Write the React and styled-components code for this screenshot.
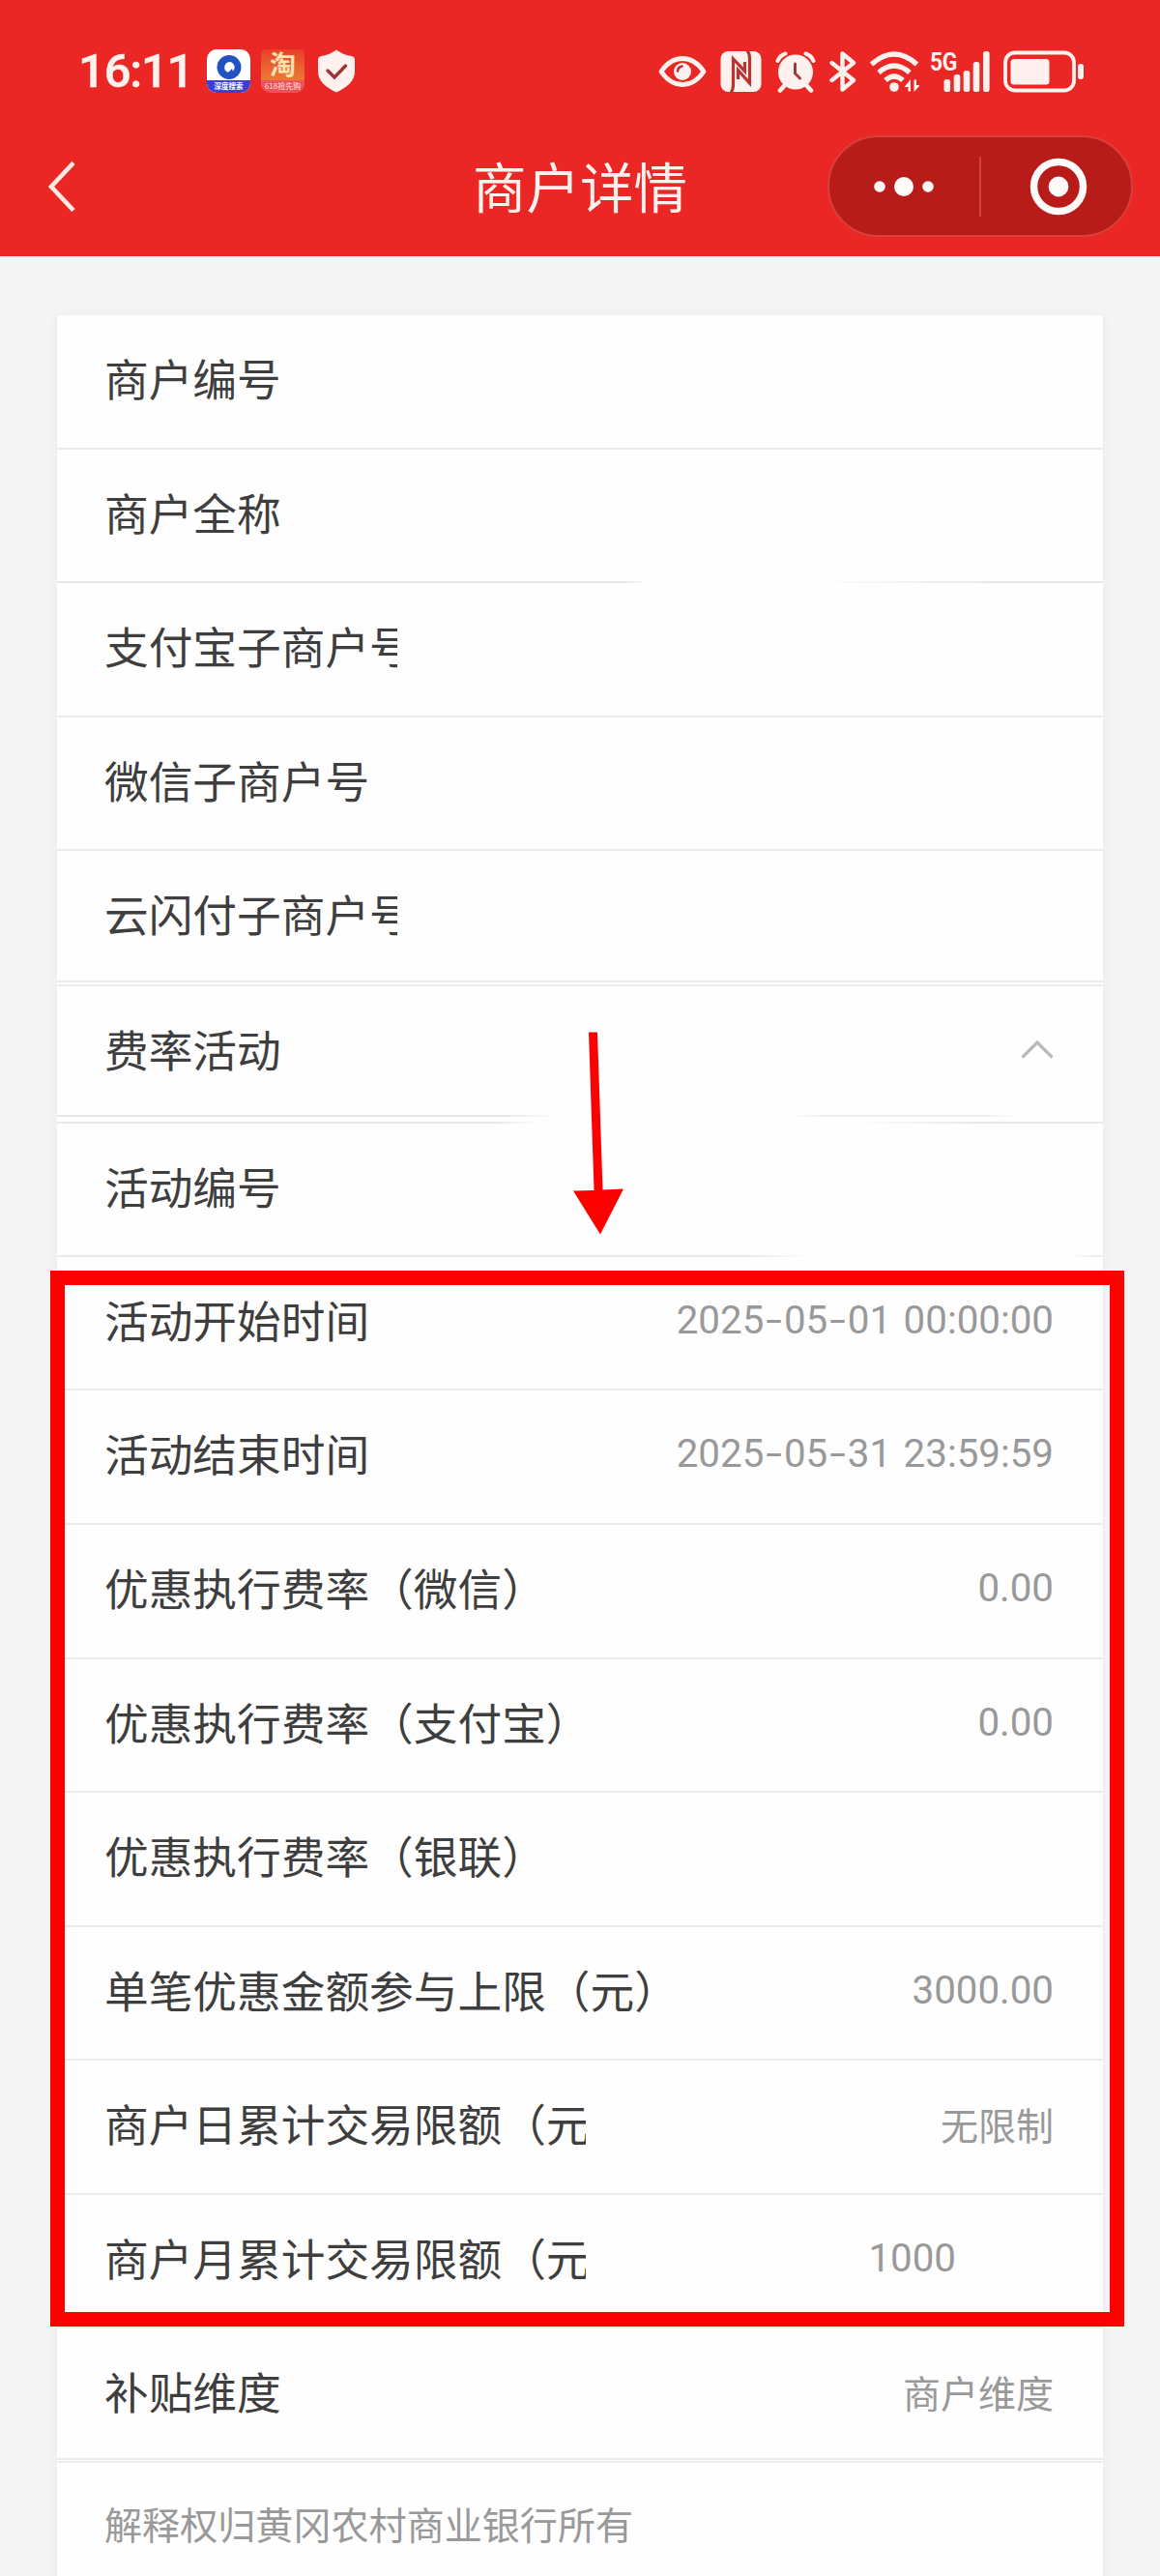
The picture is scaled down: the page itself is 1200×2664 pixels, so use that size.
import React from 'react'
import styled, { createGlobalStyle, ThemeProvider } from 'styled-components'

const theme = {
    colors: {
        primary: '#ea2724',
        mark: '#fb0200',
        ink: '#fff1ee',
        label: '#3e3e3e',
        value: '#999999',
        line: '#ebebeb',
        page: '#f4f4f4',
        card: '#fefefe',
    },
    cjk: '"Noto Sans CJK SC", sans-serif',
    digits: 'Roboto, "Noto Sans CJK SC", sans-serif',
}

// dividers that fade away in the middle of the card
const fades = {
    name: 'linear-gradient(90deg, #e8e8e8 54.5%, #fefefe 56.5%, #fefefe 72%, #e8e8e8 90%)',
    rateEnd: 'linear-gradient(90deg, #e8e8e8 43%, #fefefe 48%, #fefefe 70%, #ebebeb 74%, #ebebeb 88%, #fefefe 92%)',
    rateStart: 'linear-gradient(90deg, #e8e8e8 42%, #fefefe 46%, #fefefe 76%, #e8e8e8 88%)',
    number: 'linear-gradient(90deg, #e8e8e8 66%, #fefefe 72%, #fefefe 97%, #eeeeee 99%)',
}

const basicRows = [
    { label: '商户编号' },
    { label: '商户全称', fade: fades.name },
    { label: '支付宝子商户号', clip: 302 },
    { label: '微信子商户号' },
    { label: '云闪付子商户号', clip: 302, height: 134 },
]

const activityRows = [
    { label: '活动编号', height: 136, fade: fades.number },
    { label: '活动开始时间', value: '2025-05-01 00:00:00' },
    { label: '活动结束时间', value: '2025-05-31 23:59:59' },
    { label: '优惠执行费率（微信）', value: '0.00' },
    { label: '优惠执行费率（支付宝）', value: '0.00' },
    { label: '优惠执行费率（银联）' },
    { label: '单笔优惠金额参与上限（元）', value: '3000.00' },
    { label: '商户日累计交易限额（元）', clip: 497, text: '无限制' },
    { label: '商户月累计交易限额（元）', clip: 497, value: '1000', indent: 101 },
    { label: '补贴维度', text: '商户维度', height: 133.2 },
]

const Digits = ({ children }) => (
    <>
        {children.split(/(-)/).map((part, i) =>
            part === '-' ? <Dash key={i}><i>-</i></Dash> : part
        )}
    </>
)

const Item = ({ label, value, text, clip, height, fade, indent }) => (
    <>
        <Row $height={height}>
            <Label $clip={clip}>{label}</Label>
            {value && <Amount $indent={indent}><Digits>{value}</Digits></Amount>}
            {text && <Value>{text}</Value>}
        </Row>
        <Line $fade={fade} />
    </>
)

const StatusIcons = () => (
    <Tray>
        <svg width="50" height="44" viewBox="0 0 50 44" fill="none">
            <path d="M3 22C9 13 16 8.500 25 8.500S41 13 47 22C41 31 34 35.500 25 35.500S9 31 3 22Z" stroke="#fff1ee" strokeWidth="4.800" strokeLinejoin="round" />
            <circle cx="25" cy="22" r="9" fill="#fff1ee" />
            <path d="M20 21.500c.3-2.500 2-4.500 4.500-5" stroke="#c0302c" strokeWidth="2.600" strokeLinecap="round" />
        </svg>
        <svg width="43" height="44" viewBox="0 0 43 44">
            <rect x=".5" y="1" width="42" height="42" rx="8" fill="#fff1ee" />
            <g fill="none" stroke="#b83430" strokeWidth="3.200">
                <path d="M11 43.500Q13.500 41 13.500 35V9L25.500 21.500V12" />
                <path d="M28 .5Q30.500 3 30.500 9V34L18.500 20.500V30" />
            </g>
        </svg>
        <svg width="42" height="44" viewBox="0 0 42 44" fill="none" stroke="#fff1ee">
            <path d="M2.500 11Q4.500 5.500 10.500 3.500M39.500 11Q37.500 5.500 31.500 3.500" strokeWidth="4" strokeLinecap="round" />
            <path d="M10 36L5 41.500M32 36L37 41.500" strokeWidth="4.600" strokeLinecap="round" />
            <circle cx="21" cy="22.500" r="18" fill="#fff1ee" stroke="none" />
            <path d="M20.500 14V24L25.500 29" stroke="#a63a38" strokeWidth="3" strokeLinecap="round" />
        </svg>
        <svg width="28" height="44" viewBox="0 0 28 44" fill="none" stroke="#fff1ee" strokeWidth="4.400" strokeLinejoin="round" strokeLinecap="round">
            <path d="M2.500 13L25 31L13.500 40.500V3.500L25 13L2.500 31" />
        </svg>
        <svg width="51" height="44" viewBox="0 0 51 44" fill="none" stroke="#fff1ee" strokeWidth="5.200">
            <path d="M1.500 14.500Q25 -6.500 48.500 14.500" />
            <path d="M9 23Q25 9 41 23" />
            <path d="M16 31Q25 23 34 31" />
            <circle cx="25" cy="38" r="4.800" fill="#fff1ee" stroke="none" />
            <path d="M35.500 38L42 30V42.500H39.500V38ZM52 36L45.500 43V30.500H48V36Z" fill="#fff1ee" stroke="none" />
        </svg>
        <Signal>
            <Network>5G</Network>
            <svg width="62" height="44" viewBox="0 0 62 44" fill="#fff1ee">
                <rect x="14.500" y="30" width="6.600" height="13" rx="2.500" />
                <rect x="24.700" y="25" width="6.600" height="18" rx="2.500" />
                <rect x="34.700" y="21" width="6.600" height="22" rx="2.500" />
                <rect x="44.700" y="12" width="6.600" height="31" rx="2.500" />
                <rect x="55" y="1" width="6.600" height="42" rx="2.500" />
            </svg>
        </Signal>
        <svg width="84" height="44" viewBox="0 0 84 44">
            <rect x="2" y="2.500" width="71" height="39" rx="10" fill="none" stroke="#fff1ee" strokeWidth="3.800" />
            <rect x="7.500" y="9" width="40" height="26.500" rx="3.500" fill="#fff1ee" />
            <rect x="77" y="14" width="6" height="16" rx="3" fill="#fff1ee" />
        </svg>
    </Tray>
)

export default function App() {
    return (
        <ThemeProvider theme={theme}>
            <Reset />
            <Page>
                <Header>
                    <StatusBar>
                        <Clock>16:11</Clock>
                        <SearchApp>
                            <svg width="26" height="27" viewBox="0 0 26 27">
                                <circle cx="13" cy="13.500" r="12.500" fill="#2152c4" />
                                <path d="M13 8a5.500 5.500 0 1 1-3.500 9.600A6 6 0 0 1 13 8z" fill="#fff" />
                                <path d="M11 20l5 -5l2 6z" fill="#2152c4" />
                            </svg>
                            <AppTag>深度搜索</AppTag>
                        </SearchApp>
                        <ShopApp>
                            <ShopGlyph>淘</ShopGlyph>
                            <ShopTag>618抢先购</ShopTag>
                        </ShopApp>
                        <svg width="40" height="45" viewBox="0 0 40 45">
                            <path d="M20 0.500C26 5 32 6.500 36 7Q39 8 39 11V23C39 33 31 39 20 44.500C9 39 1 33 1 23V11Q1 8 4 7C8 6.500 14 5 20 .5Z" fill="#fff1ee" />
                            <path d="M11 22L18 29L29.500 17" fill="none" stroke="#9c3438" strokeWidth="3.400" strokeLinecap="round" />
                        </svg>
                        <StatusIcons />
                    </StatusBar>
                    <NavBar>
                        <Back>
                            <svg width="28" height="52" viewBox="0 0 28 52" fill="none" stroke="#ffe9e4" strokeWidth="4.600">
                                <path d="M26 1.500L3 26L26 50.500" />
                            </svg>
                        </Back>
                        <Title>商户详情</Title>
                        <Capsule>
                            <svg width="62" height="22" viewBox="0 0 62 22" fill="#fffafa">
                                <circle cx="6" cy="11" r="5.800" />
                                <circle cx="31" cy="11" r="10" />
                                <circle cx="56" cy="11" r="5.800" />
                            </svg>
                            <Split />
                            <svg width="60" height="60" viewBox="0 0 60 60">
                                <circle cx="30" cy="30" r="25.500" fill="none" stroke="#fffafa" strokeWidth="7.500" />
                                <circle cx="30" cy="30" r="10.400" fill="#fffafa" />
                            </svg>
                        </Capsule>
                    </NavBar>
                </Header>

                <Card>
                    {basicRows.map((row) => <Item key={row.label} {...row} />)}
                    <Gap $size={1.6} />
                    <Line />
                    <Row $height={133}>
                        <Label>费率活动</Label>
                        <svg width="34" height="132" viewBox="0 0 34 132" fill="none" stroke="#b9b9b9" strokeWidth="3.200">
                            <path d="M1.500 73.500L17 58L32.500 73.500" />
                        </svg>
                    </Row>
                    <Line $fade={fades.rateEnd} />
                    <Gap $size={5} />
                    <Line $fade={fades.rateStart} />
                    {activityRows.map((row) => <Item key={row.label} {...row} />)}
                    <Gap $size={1.2} />
                    <Line />
                    <Note>解释权归黄冈农村商业银行所有</Note>
                </Card>

                <Arrow width="60" height="212" viewBox="0 0 60 212" fill="#fb0200">
                    <path d="M17 1.500H26L31.500 164.500L53 163.500L29 210.500L1 165.500L22.500 165Z" />
                </Arrow>
                <Highlight />
            </Page>
        </ThemeProvider>
    )
}

const Reset = createGlobalStyle`
    * {
        box-sizing: border-box;
    }

    body {
        margin: 0;
        background: #f4f4f4;
    }

    svg {
        display: block;
        flex: none;
    }
`

const Page = styled.div`
    position: relative;
    display: flex;
    flex-direction: column;

    width: 1200px;
    height: 2664px;
    overflow: hidden;

    background: ${props => props.theme.colors.page};
    font-family: ${props => props.theme.cjk};
`

const Header = styled.header`
    flex: none;
    height: 265px;
    background: ${props => props.theme.colors.primary};
    color: ${props => props.theme.colors.ink};
`

const StatusBar = styled.div`
    display: flex;
    align-items: center;

    height: 120px;
    padding: 27px 78px 0 81px;
`

const Clock = styled.div`
    width: 133px;
    font: 500 49px/46px ${props => props.theme.digits};
    letter-spacing: -1.2px;
    -webkit-text-stroke: 0.5px ${props => props.theme.colors.ink};
`

const AppIcon = styled.div`
    display: flex;
    flex-direction: column;
    align-items: center;

    flex: none;
    width: 45px;
    height: 45px;
`

const SearchApp = styled(AppIcon)`
    margin-right: 11px;
    padding-top: 5px;
    border-radius: 10px;
    background: #ffffff;
`

const AppTag = styled.div`
    width: 100%;
    height: 13px;
    border-radius: 0 0 10px 10px;
    background: #3b3fd8;
    color: #ffffff;
    font-weight: 700;
    font-size: 7.5px;
    line-height: 12px;
    text-align: center;
`

const ShopApp = styled(AppIcon)`
    margin-right: 13px;
    border-radius: 5px 5px 10px 10px;
    background: linear-gradient(#e8402a, #ea7a35 70%);
`

const ShopGlyph = styled.div`
    height: 32px;
    color: #ffe2b0;
    font-weight: 700;
    font-size: 27px;
    line-height: 29px;
`

const ShopTag = styled.div`
    width: 100%;
    height: 13px;
    border-radius: 0 0 10px 10px;
    background: #f0505a;
    color: #ffe4dc;
    font-size: 8px;
    line-height: 12px;
    text-align: center;
    white-space: nowrap;
`

const Tray = styled.div`
    display: flex;
    align-items: center;
    gap: 14px;
    margin-left: auto;
`

const Signal = styled.div`
    position: relative;
    margin-left: -3px;
`

const Network = styled.span`
    position: absolute;
    top: 1px;
    left: 0;
    font: 700 26px/22px Roboto, sans-serif;
    letter-spacing: -0.5px;
    transform: scaleX(0.88);
    transform-origin: left;
`

const NavBar = styled.nav`
    display: grid;
    grid-template-columns: 1fr auto 1fr;
    align-items: center;
    height: 145px;
`

const Back = styled.div`
    padding-left: 50px;
`

const Title = styled.h1`
    margin: 0;
    padding-bottom: 4px;
    font-weight: 400;
    font-size: 55.5px;
    line-height: 80px;
`

const Capsule = styled.div`
    display: flex;
    align-items: center;
    justify-self: end;

    width: 316px;
    height: 105px;
    margin-right: 28px;
    padding-left: 46px;

    border: 2px solid #d8403d;
    border-radius: 53px;
    background: #b71c19;
`

const Split = styled.div`
    width: 2px;
    height: 62px;
    margin: 0 50px 0 47px;
    background: #cc4340;
`

const Card = styled.main`
    flex: 1;
    margin: 61px 59px 0 59px;
    background: ${props => props.theme.colors.card};
    box-shadow: 0 0 9px rgba(0, 0, 0, 0.05);
`

const Row = styled.div`
    display: flex;
    align-items: flex-start;
    justify-content: space-between;

    height: ${props => props.$height || 136.57}px;
    padding: 0 51px 0 49px;
`

const Line = styled.div`
    height: 2px;
    background: ${props => props.$fade || props.theme.colors.line};
`

const Gap = styled.div`
    height: ${props => props.$size}px;
`

const Label = styled.div`
    width: ${props => props.$clip ? `${props.$clip + 1}px` : 'auto'};
    overflow: hidden;
    color: ${props => props.theme.colors.label};
    font-size: 45.7px;
    line-height: 129px;
    white-space: nowrap;
`

const Value = styled.div`
    color: ${props => props.theme.colors.value};
    font-size: 39px;
    line-height: 130px;
`

const Amount = styled(Value)`
    margin-right: ${props => props.$indent || 0}px;
    font-family: ${props => props.theme.digits};
    font-size: 40.3px;
    line-height: 131px;
    word-spacing: 2.5px;
    white-space: pre;
`

const Dash = styled.span`
    display: inline-block;
    width: 20.6px;
    text-align: center;

    i {
        display: inline-block;
        font-style: normal;
        transform: scaleX(1.5);
    }
`

const Note = styled.div`
    padding-left: 49px;
    color: ${props => props.theme.colors.value};
    font-size: 39.1px;
    line-height: 125px;
`

const Arrow = styled.svg`
    position: absolute;
    top: 1066px;
    left: 592px;
`

const Highlight = styled.div`
    position: absolute;
    top: 1314px;
    left: 52px;
    width: 1111px;
    height: 1092px;
    border: 15px solid ${props => props.theme.colors.mark};
`
